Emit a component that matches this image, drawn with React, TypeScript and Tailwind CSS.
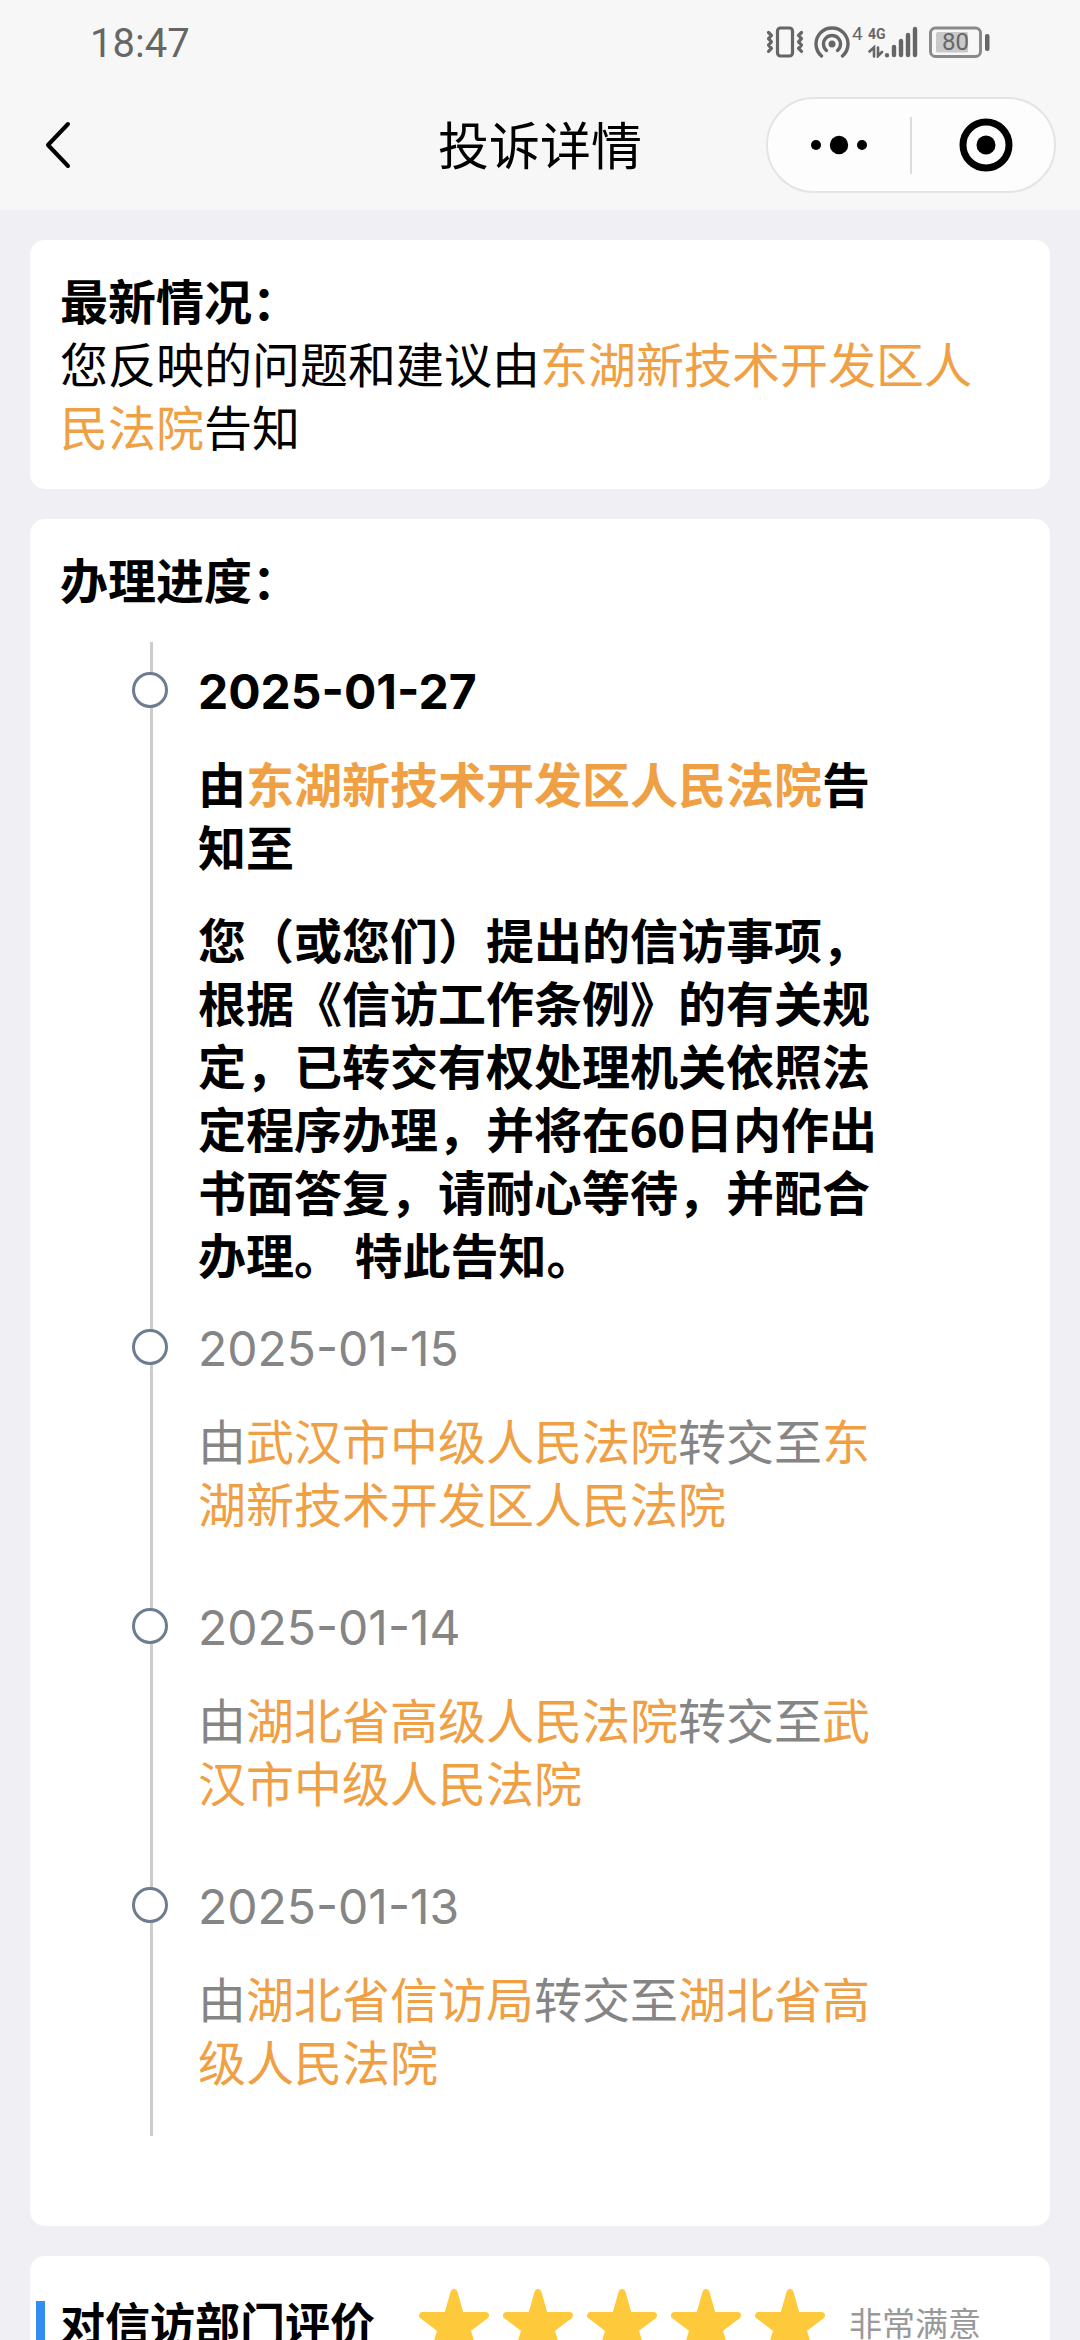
import { useState } from "react";

type Step = {
    date: string;
    from: string;
    action: string;
    to?: string;
    detail?: string;
};

const steps: Step[] = [
    {
        date: "2025-01-27",
        from: "东湖新技术开发区人民法院",
        action: "告知至",
        detail: "您（或您们）提出的信访事项，根据《信访工作条例》的有关规定，已转交有权处理机关依照法定程序办理，并将在60日内作出书面答复，请耐心等待，并配合办理。 特此告知。",
    },
    { date: "2025-01-15", from: "武汉市中级人民法院", action: "转交至", to: "东湖新技术开发区人民法院" },
    { date: "2025-01-14", from: "湖北省高级人民法院", action: "转交至", to: "武汉市中级人民法院" },
    { date: "2025-01-13", from: "湖北省信访局", action: "转交至", to: "湖北省高级人民法院" },
];

const ratingLabels = ["非常不满意", "不满意", "一般", "满意", "非常满意"];

function StatusBar() {
    return (
        <div className="flex h-[84px] items-center justify-between px-[90px] font-[Roboto,sans-serif] text-[#666]">
            <span className="pt-1 text-[40px] leading-none">18:47</span>
            <div className="flex items-center">
                {/* vibrate */}
                <svg className="h-8 w-[38px]" viewBox="0 0 38 32" fill="none" stroke="currentColor" strokeWidth="3.2" strokeLinejoin="round" strokeLinecap="round">
                    <rect x="11.5" y="2" width="15" height="28" rx="3" />
                    <path d="M2.500 6.500l3 3-3 3.200 3 3.200-3 3.200 3 3.200-3 3M35.500 6.500l-3 3 3 3.200-3 3.200 3 3.200-3 3.200 3 3" />
                </svg>
                {/* hotspot */}
                <svg className="ml-2.5 h-8 w-[38px]" viewBox="0 0 38 32" fill="none" stroke="currentColor" strokeWidth="3.4" strokeLinecap="round">
                    <path d="M7.500 30a16 16 0 1 1 21 0" />
                    <path d="M12.500 24.500a8.500 8.500 0 1 1 11 0" />
                    <circle cx="18" cy="18" r="3.500" fill="currentColor" stroke="none" />
                </svg>
                <span className="h-8 w-4 text-[19px] leading-4">4</span>
                {/* mobile network */}
                <div className="relative h-8 w-[51px]">
                    <span className="absolute left-0 top-0 text-[14px] font-bold leading-4">4G</span>
                    <svg className="h-8 w-[51px]" viewBox="0 0 51 32" fill="none" stroke="currentColor" strokeWidth="4.4" strokeLinecap="round">
                        <path d="M19 29.200v.1M26 21v8M33 15v14M40 9v20M47 3v26" />
                        <path strokeWidth="2.6" d="M1.500 25.500l4.500-4v9M10 21.500v8.500l4-4" />
                    </svg>
                </div>
                {/* battery */}
                <div className="relative ml-2.5 flex h-8 w-[61px]">
                    <svg className="h-8 w-[61px]" viewBox="0 0 61 32" fill="none">
                        <rect x="1.500" y="2" width="50" height="28.500" rx="5" stroke="#8a8a8a" strokeWidth="3" />
                        <rect x="7" y="6" width="32" height="20.500" rx="1.500" fill="#c9c9c9" />
                        <rect x="56" y="8" width="4.500" height="17" rx="2" fill="#666" />
                    </svg>
                    <span className="absolute inset-y-0 left-0 w-[53px] text-center text-[24px] leading-8">80</span>
                </div>
            </div>
        </div>
    );
}

function NavBar() {
    return (
        <div className="grid h-[122px] grid-cols-3 items-center px-6">
            <button type="button" aria-label="返回" className="flex h-24 w-24 items-center pl-5">
                <svg className="h-12 w-7" viewBox="0 0 28 48" fill="none" stroke="#000" strokeWidth="4" strokeLinecap="round" strokeLinejoin="round">
                    <path d="M24 3L4 24l20 21" />
                </svg>
            </button>
            <h1 className="text-center text-[51px] leading-[63px]">投诉详情</h1>
            <div className="flex h-24 w-[290px] items-center justify-self-end rounded-full border-2 border-[#e4e4e4] bg-[#fdfdfd]">
                <button type="button" aria-label="更多" className="flex h-full flex-1 items-center justify-center">
                    <svg className="h-5 w-14" viewBox="0 0 56 20">
                        <circle cx="5" cy="10" r="5" />
                        <circle cx="28" cy="10" r="9.200" />
                        <circle cx="51" cy="10" r="5" />
                    </svg>
                </button>
                <span className="h-[57px] w-0.5 bg-[#dcdcdc]" />
                <button type="button" aria-label="关闭" className="flex h-full w-[142px] items-center justify-center pl-1.5">
                    <svg className="h-[54px] w-[54px]" viewBox="0 0 54 54">
                        <circle cx="27" cy="27" r="23" fill="none" stroke="#000" strokeWidth="7" />
                        <circle cx="27" cy="27" r="9.500" />
                    </svg>
                </button>
            </div>
        </div>
    );
}

function Timeline() {
    return (
        <ol className="mb-[60px] ml-[90px] mt-[30px] flex flex-col gap-[30px] border-l-[3px] border-[#ccc] pb-3 pl-[45px] pr-[120px] pt-[18px]">
            {steps.map((step, index) => (
                <li
                    key={step.date}
                    className={index === 0 ? "relative grid gap-[30px] font-bold" : "relative grid gap-[30px] text-[#858585]"}
                >
                    <span className="absolute -left-[66px] top-3 h-9 w-9 rounded-full border-[3px] border-[#6b7d8e] bg-white" />
                    <time dateTime={step.date} className="font-[Inter,sans-serif]">
                        {step.date}
                    </time>
                    <p>
                        由<span className="text-[#f0a044]">{step.from}</span>
                        {step.action}
                        {step.to && <span className="text-[#f0a044]">{step.to}</span>}
                    </p>
                    {/* stays in the grid when empty so the gap below is kept */}
                    <p>{step.detail}</p>
                </li>
            ))}
        </ol>
    );
}

function RatingCard() {
    const [rating, setRating] = useState(5);

    return (
        <section className="flex items-center rounded-[15px] bg-white pb-8 pl-1.5 pt-8">
            <span className="h-[45px] w-[9px] bg-[#338cf2]" />
            <h2 className="ml-[15px] text-[45px] font-bold leading-[63px]">对信访部门评价</h2>
            <div className="ml-11 flex gap-3.5">
                {ratingLabels.map((label, i) => (
                    <button key={label} type="button" aria-label={label} onClick={() => setRating(i + 1)}>
                        <svg
                            className={i < rating ? "h-[70px] w-[70px] text-[#ffc93c]" : "h-[70px] w-[70px] text-gray-300"}
                            viewBox="0 0 70 70"
                            fill="currentColor"
                            stroke="currentColor"
                            strokeWidth="7"
                            strokeLinejoin="round"
                        >
                            <path d="M35 4.500L41.500 27.500H66.500L48 41.500L55 65L35 52L15 65L22 41.500L3.500 27.500H28.500Z" />
                        </svg>
                    </button>
                ))}
            </div>
            <span className="ml-6 text-[33px] text-[#999]">{ratingLabels[rating - 1]}</span>
        </section>
    );
}

export default function App() {
    return (
        <div className="flex h-screen flex-col bg-[#efeff4] font-['Noto_Sans','Noto_Sans_CJK_SC',sans-serif] text-black" lang="zh-CN">
            <header className="shrink-0 bg-[#f7f7f7] pb-1">
                <StatusBar />
                <NavBar />
            </header>

            <main className="flex-1 space-y-[30px] overflow-y-auto p-[30px] text-[48px] leading-[63px] [scrollbar-width:none]">
                <section className="rounded-[15px] bg-white p-[30px]">
                    <h2 className="font-bold">最新情况：</h2>
                    <p>
                        您反映的问题和建议由<span className="text-[#f0a044]">东湖新技术开发区人民法院</span>告知
                    </p>
                </section>

                <section className="flow-root rounded-[15px] bg-white p-[30px]">
                    <h2 className="font-bold">办理进度：</h2>
                    <Timeline />
                </section>

                <RatingCard />
            </main>
        </div>
    );
}
